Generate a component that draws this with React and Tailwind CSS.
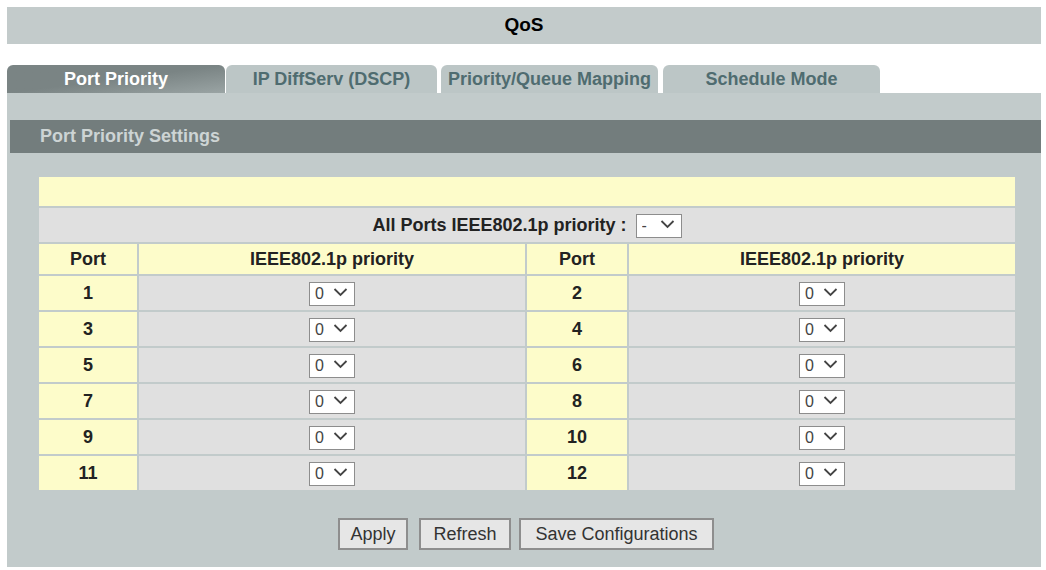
import React from "react";

const ports = [
  [1, 2],
  [3, 4],
  [5, 6],
  [7, 8],
  [9, 10],
  [11, 12],
];

function PrioritySelect({ value = "0", options, className = "" }) {
  const opts = options || ["0", "1", "2", "3", "4", "5", "6", "7"];
  return (
    <span className={"relative inline-block align-middle " + className}>
      <select
        defaultValue={value}
        className="appearance-none w-[46px] h-[24px] bg-white border border-[#8d8d8d] pl-[5px] text-[16px] font-normal leading-none text-[#444] outline-none"
      >
        {opts.map((o) => (
          <option key={o} value={o}>
            {o}
          </option>
        ))}
      </select>
      <svg
        className="pointer-events-none absolute right-[7px] top-[7px]"
        width="15"
        height="10"
        viewBox="0 0 15 10"
      >
        <path d="M1.5 2 L7.5 8 L13.5 2" fill="none" stroke="#444" strokeWidth="1.8" />
      </svg>
    </span>
  );
}

function Tab({ label, active, className }) {
  return (
    <div
      className={
        "h-[28px] rounded-t-[6px] flex items-center justify-center text-[18px] font-bold " +
        (active
          ? "bg-gradient-to-br from-[#7a8484] via-[#7a8484] to-[#9aa4a4] text-white "
          : "bg-[#bcc6c6] text-[#4f6c70] ") +
        className
      }
    >
      {label}
    </div>
  );
}

export default function App() {
  return (
    <div className="min-h-screen bg-white font-['Liberation_Sans',Arial,sans-serif] pl-[7px] pt-[7px]">
      <div className="w-[1034px]">
        {/* page title */}
        <div className="h-[37px] bg-[#c3cbcb] flex items-center justify-center text-[19px] font-bold text-black">
          QoS
        </div>

        {/* tabs */}
        <div className="mt-[21px] flex items-end">
          <Tab label="Port Priority" active className="w-[218px] justify-start pl-[57px]" />
          <Tab label="IP DiffServ (DSCP)" className="w-[211px] ml-[1px]" />
          <Tab label="Priority/Queue Mapping" className="w-[217px] ml-[4px]" />
          <Tab label="Schedule Mode" className="w-[217px] ml-[5px]" />
        </div>

        {/* panel */}
        <div className="bg-[#c2cbcb] pt-[27px] pb-[17px]">
          <div className="ml-[3px] h-[33px] bg-[#737d7d] flex items-center pl-[30px] text-[18px] font-bold text-[#cdd4d4]">
            Port Priority Settings
          </div>

          <div className="pl-[30px] pt-[22px]">
            <table className="w-[980px] table-fixed border-separate border-spacing-[2px] text-[18px] font-bold text-[#222]">
              <colgroup>
                <col className="w-[98px]" />
                <col className="w-[386px]" />
                <col className="w-[100px]" />
                <col className="w-[386px]" />
              </colgroup>
              <tbody>
                <tr>
                  <td colSpan={4} className="h-[29px] bg-[#fdfcca]" />
                </tr>
                <tr>
                  <td colSpan={4} className="h-[34px] bg-[#e0e0e0] text-center">
                    <span className="align-middle">All Ports IEEE802.1p priority :</span>
                    <PrioritySelect
                      value="-"
                      options={["-", "0", "1", "2", "3", "4", "5", "6", "7"]}
                      className="ml-[9px]"
                    />
                  </td>
                </tr>
                <tr>
                  <td className="h-[30px] bg-[#fdfcca] text-center">Port</td>
                  <td className="bg-[#fdfcca] text-center">IEEE802.1p priority</td>
                  <td className="bg-[#fdfcca] text-center">Port</td>
                  <td className="bg-[#fdfcca] text-center">IEEE802.1p priority</td>
                </tr>
                {ports.map(([a, b]) => (
                  <tr key={a}>
                    <td className="h-[34px] bg-[#fdfcca] text-center">{a}</td>
                    <td className="bg-[#e0e0e0] text-center">
                      <PrioritySelect />
                    </td>
                    <td className="bg-[#fdfcca] text-center">{b}</td>
                    <td className="bg-[#e0e0e0] text-center">
                      <PrioritySelect />
                    </td>
                  </tr>
                ))}
              </tbody>
            </table>
          </div>

          <div className="mt-[26px] flex justify-center pl-[4px]">
            <button className="w-[70px] h-[32px] bg-[#e6e6e6] border-2 border-[#8e8e8e] text-[18px] text-[#333]">
              Apply
            </button>
            <button className="ml-[11px] w-[92px] h-[32px] bg-[#e6e6e6] border-2 border-[#8e8e8e] text-[18px] text-[#333]">
              Refresh
            </button>
            <button className="ml-[8px] w-[195px] h-[32px] bg-[#e6e6e6] border-2 border-[#8e8e8e] text-[18px] text-[#333]">
              Save Configurations
            </button>
          </div>
        </div>
      </div>
    </div>
  );
}
